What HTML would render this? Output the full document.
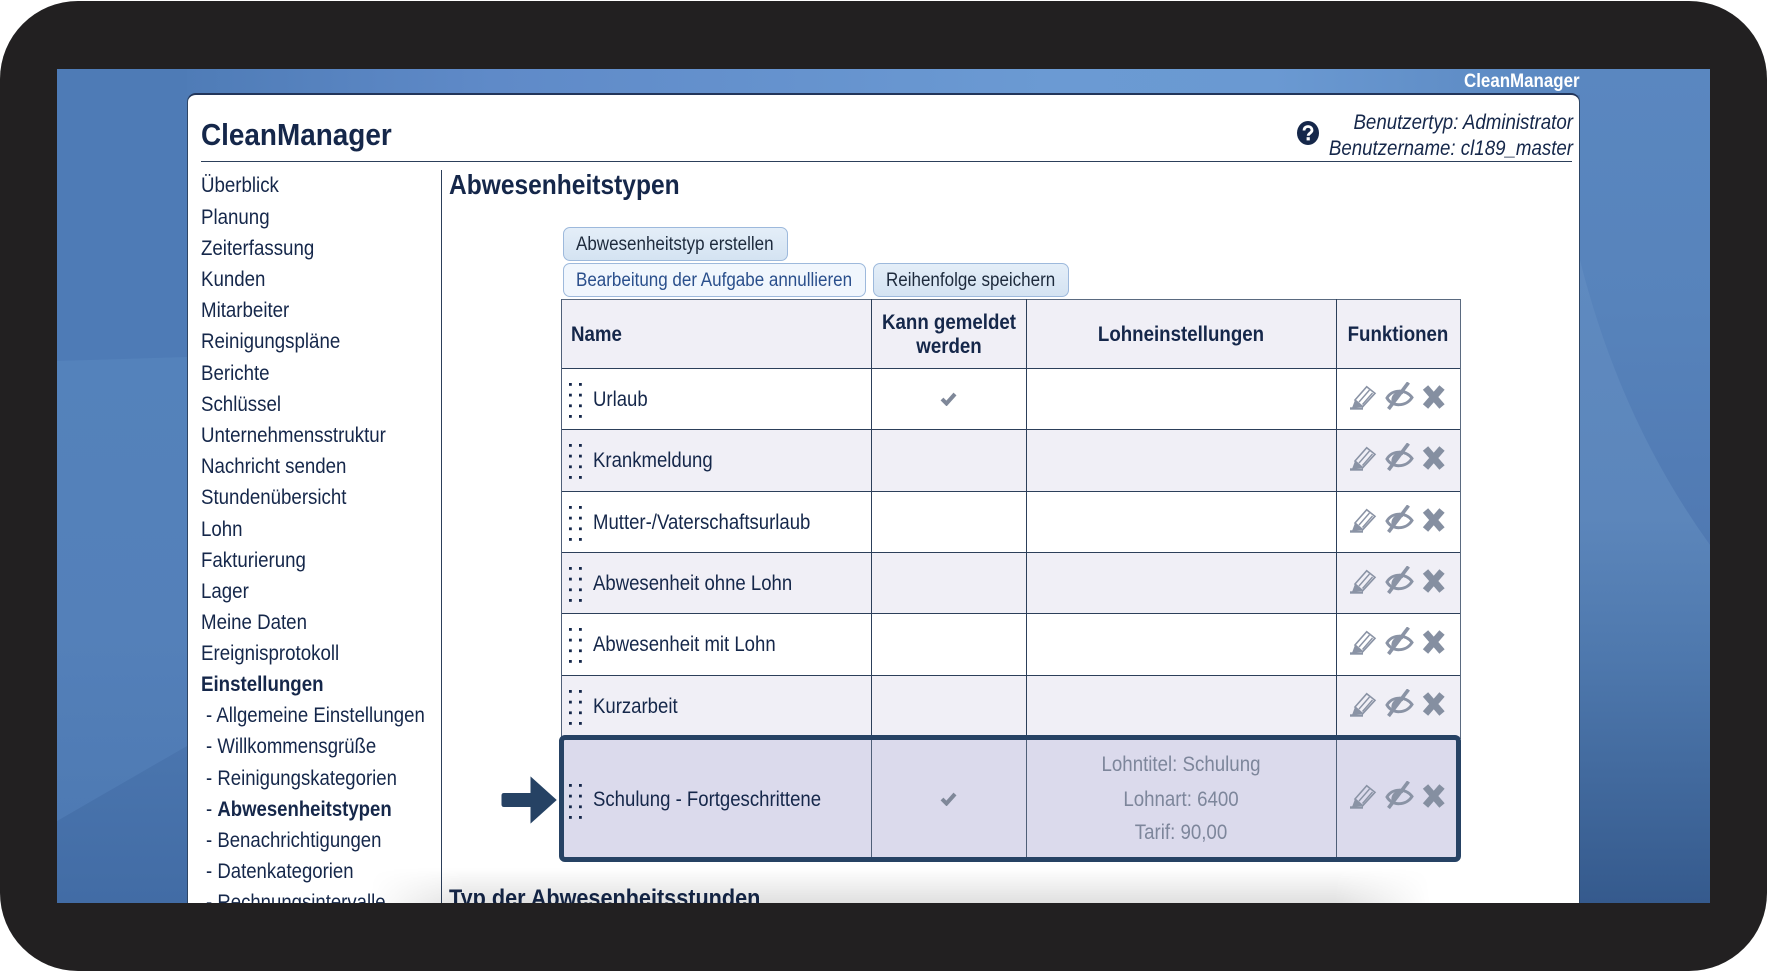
<!DOCTYPE html>
<html lang="de"><head><meta charset="utf-8"><title>CleanManager</title>
<style>
html,body{margin:0;padding:0;background:#fff;width:1767px;height:971px;overflow:hidden}
body{position:relative;font-family:"Liberation Sans",Arial,sans-serif;color:#15274a}
.frame{position:absolute;left:0;top:1px;width:1767px;height:970px;background:#222021;border-radius:78px}
.screen{position:absolute;left:57px;top:69px;width:1653px;height:834px;overflow:hidden;background:#4f7ab3}
.in{position:absolute;left:-57px;top:-69px;width:1767px;height:971px}
.strip{position:absolute;left:187px;top:69px;width:1393px;height:26px;background:linear-gradient(90deg,#4f7cb7 0,#5f8ac8 22%,#6b9ad3 62%,#6a99d2 78%,#5a87c0 100%)}
.panel{position:absolute;left:186.500px;top:93px;width:1393px;height:900px;background:#fff;border:1px solid #2d4565;border-top:2px solid #22355a;border-radius:9px 9px 0 0;box-sizing:border-box}
.t{position:absolute;white-space:nowrap;font-size:21px;line-height:30px;height:30px;margin-top:-15px;transform-origin:0 0;transform:scaleX(.89)}
.c{transform:scaleX(.89) translateX(-50%)}
.r{transform:scaleX(.89) translateX(-100%)}
.n{transform:scaleX(.884)}
.bt{font-size:19px;transform:scaleX(.895)}
.b{font-weight:bold}
.g{color:#7d869b}
.abs{position:absolute}
.btn{position:absolute;box-sizing:border-box;border:1px solid #9db9dc;border-radius:7px;background:linear-gradient(#e4eef8,#d4e3f2)}
.btn.l{background:#f0f6fd}
.h{position:absolute;background:#2c3f5a;height:1.2px;left:561px;width:899px}
.v{position:absolute;background:#2c3f5a;width:1.2px;top:299px;height:560px}
.row{position:absolute;left:562px;width:898px}
.gr{background:#f0eff6}
.ds{position:absolute;left:568px}
.fn{position:absolute;left:1349px;filter:blur(.35px)}
.sh{position:absolute;left:370px;top:868px;width:1060px;height:35px;background:linear-gradient(to bottom,rgba(0,0,0,0),rgba(0,0,0,.12));-webkit-mask-image:linear-gradient(90deg,transparent,#000 9%,#000 91%,transparent);mask-image:linear-gradient(90deg,transparent,#000 9%,#000 91%,transparent)}
</style></head><body>
<div class="frame"></div>
<div class="screen"><div class="in">
<svg class="abs" style="left:0;top:0" width="1767" height="971">
<defs>
<linearGradient id="la" x1="0" y1="0" x2="0" y2="1"><stop offset="0" stop-color="#5482bb"/><stop offset=".6" stop-color="#5480b9"/><stop offset="1" stop-color="#4e7ab3"/></linearGradient>
<linearGradient id="lb" x1="0" y1="0" x2="0" y2="1"><stop offset="0" stop-color="#4a75ae"/><stop offset="1" stop-color="#426ca5"/></linearGradient>
<linearGradient id="ra" x1="0" y1="0" x2="0" y2="1"><stop offset="0" stop-color="#5a87c0"/><stop offset=".5" stop-color="#5783bb"/><stop offset="1" stop-color="#5079b2"/></linearGradient>
<linearGradient id="rb" gradientUnits="userSpaceOnUse" x1="0" y1="260" x2="0" y2="903"><stop offset="0" stop-color="#5f8ac0"/><stop offset=".4" stop-color="#5c86bb"/><stop offset=".62" stop-color="#4e78ad"/><stop offset="1" stop-color="#355a8d"/></linearGradient>
</defs>
<rect x="57" y="69" width="130" height="292" fill="#4e7bb6"/>
<polygon points="57,361 187,357 187,746 57,821" fill="url(#la)"/>
<polygon points="57,821 187,746 187,903 57,903" fill="url(#lb)"/>
<rect x="1580" y="69" width="130" height="476" fill="url(#ra)"/>
<path d="M1580 260Q1620 420 1710 545L1710 903 1580 903Z" fill="url(#rb)"/>
</svg>
<div class="strip"></div>
<div class="t b" style="left:1464px;top:82px;font-size:19px;color:#fff">CleanManager</div>
<div class="panel"></div>

<div class="t b" style="left:201px;top:135px;font-size:31px;transform:scaleX(.9)">CleanManager</div>
<div class="abs" style="left:201px;top:161px;width:1371px;height:1px;background:#2c3f5a"></div>
<svg class="abs" style="left:1297px;top:121px" width="22" height="24" viewBox="0 0 22 24"><ellipse cx="11" cy="12" rx="11" ry="12" fill="#15274a"/><path d="M7 9.500C7 7 8.800 5.500 11 5.500S15 7 15 9.300C15 12 11.200 12.200 11.200 14.800" fill="none" stroke="#fff" stroke-width="2.800"/><rect x="9.600" y="16.200" width="3.200" height="3.200" fill="#fff"/></svg>
<div class="t r" style="left:1573px;top:123px;font-style:italic">Benutzertyp: Administrator</div>
<div class="t r" style="left:1573px;top:149px;font-style:italic">Benutzername: cl189_master</div>

<div class="abs" style="left:441px;top:170px;width:1px;height:740px;background:#2c3f5a"></div>

<div class="t" style="left:201px;top:186.300px">Überblick</div>
<div class="t" style="left:201px;top:217.500px">Planung</div>
<div class="t" style="left:201px;top:248.700px">Zeiterfassung</div>
<div class="t" style="left:201px;top:279.900px">Kunden</div>
<div class="t" style="left:201px;top:311.100px">Mitarbeiter</div>
<div class="t" style="left:201px;top:342.300px">Reinigungspläne</div>
<div class="t" style="left:201px;top:373.500px">Berichte</div>
<div class="t" style="left:201px;top:404.700px">Schlüssel</div>
<div class="t" style="left:201px;top:435.900px">Unternehmensstruktur</div>
<div class="t" style="left:201px;top:467.100px">Nachricht senden</div>
<div class="t" style="left:201px;top:498.300px">Stundenübersicht</div>
<div class="t" style="left:201px;top:529.500px">Lohn</div>
<div class="t" style="left:201px;top:560.700px">Fakturierung</div>
<div class="t" style="left:201px;top:591.900px">Lager</div>
<div class="t" style="left:201px;top:623.100px">Meine Daten</div>
<div class="t" style="left:201px;top:654.300px">Ereignisprotokoll</div>
<div class="t b" style="left:201px;top:685px">Einstellungen</div>
<div class="t n" style="left:206px;top:716.300px">- Allgemeine Einstellungen</div>
<div class="t n" style="left:206px;top:747.400px">- Willkommensgrüße</div>
<div class="t n" style="left:206px;top:778.600px">- Reinigungskategorien</div>
<div class="t n" style="left:206px;top:809.800px">- <b>Abwesenheitstypen</b></div>
<div class="t n" style="left:206px;top:841px">- Benachrichtigungen</div>
<div class="t n" style="left:206px;top:872.200px">- Datenkategorien</div>
<div class="t n" style="left:206px;top:903.400px">- Rechnungsintervalle</div>

<div class="t b" style="left:449px;top:185px;font-size:27.500px;transform:scaleX(.893)">Abwesenheitstypen</div>
<div class="t b" style="left:449px;top:899px;font-size:24.500px;transform:scaleX(.883)">Typ der Abwesenheitsstunden</div>

<div class="btn" style="left:563px;top:227px;width:225px;height:34px"></div>
<div class="t bt" style="left:576px;top:244.500px;color:#1d2a3c">Abwesenheitstyp erstellen</div>
<div class="btn l" style="left:563px;top:263px;width:303px;height:34px"></div>
<div class="t bt" style="left:576px;top:280.500px;color:#2a4f8c">Bearbeitung der Aufgabe annullieren</div>
<div class="btn" style="left:873px;top:263px;width:196px;height:34px"></div>
<div class="t bt" style="left:886px;top:280.500px;color:#1d2a3c">Reihenfolge speichern</div>

<div class="row gr" style="top:299px;height:69px"></div>
<div class="row gr" style="top:430px;height:61px"></div>
<div class="row gr" style="top:552px;height:61px"></div>
<div class="row gr" style="top:675px;height:61px"></div>
<div class="row" style="top:736px;height:124px;background:#dbdaec"></div>

<div class="h" style="top:298.500px;background:#5a6a80;height:1.500px"></div>
<div class="h" style="top:368px"></div>
<div class="h" style="top:429px"></div>
<div class="h" style="top:490.500px"></div>
<div class="h" style="top:552px"></div>
<div class="h" style="top:613px"></div>
<div class="h" style="top:674.500px"></div>
<div class="v" style="left:561px;background:#4f5f78;height:440px"></div>
<div class="v" style="left:870.500px"></div>
<div class="v" style="left:1025.500px"></div>
<div class="v" style="left:1335.500px"></div>
<div class="v" style="left:1459.500px;background:#5a6a80;height:440px"></div>

<div class="t b" style="left:571.300px;top:335px">Name</div>
<div class="t b c" style="left:949px;top:322.500px">Kann gemeldet</div>
<div class="t b c" style="left:949px;top:346.500px">werden</div>
<div class="t b c" style="left:1181px;top:335px">Lohneinstellungen</div>
<div class="t b c" style="left:1398px;top:335px">Funktionen</div>

<svg width="0" height="0" style="position:absolute"><defs>
<symbol id="dots" viewBox="0 0 16 36"><g fill="#15274a"><rect x="1" y="0" width="2.800" height="2.800"/><rect x="11" y="0" width="2.800" height="2.800"/><rect x="1" y="10.700" width="2.800" height="2.800"/><rect x="11" y="10.700" width="2.800" height="2.800"/><rect x="1" y="21.400" width="2.800" height="2.800"/><rect x="11" y="21.400" width="2.800" height="2.800"/><rect x="1" y="32" width="2.800" height="2.800"/><rect x="11" y="32" width="2.800" height="2.800"/></g></symbol>
<symbol id="fn" viewBox="0 0 98 30"><g fill="none" stroke="#8a93a5">
<path d="M6 18L17.700 4.700 26 11.300 13.700 24.700Z" stroke-width="1.600"/><path d="M10 20L20.500 8M13.500 22.500L23.500 11" stroke-width="1.400"/><path d="M1 26.500H14" stroke-width="2.400"/><path d="M3 26L6 18 13.700 24.700Z" fill="#8a93a5" stroke="none"/>
<path d="M38 16C43 7 57 7 63 15.500C57 25 43 25 38 16Z" stroke-width="3"/><path d="M44 19C43.500 13 49 10 54 10.500" stroke-width="3.200"/><path d="M59.500 0.500L39.500 27" stroke-width="3.600"/>
<path d="M76.500 5.500L93 24.500M93 5.500L76.500 24.500" stroke-width="7" stroke="#858fa1"/></g></symbol>
<symbol id="ck" viewBox="0 0 17 14"><path d="M2 7L6.500 11.500L15 2" fill="none" stroke="#7f8899" stroke-width="4"/></symbol>
</defs></svg>

<svg class="ds" style="top:383px" width="16" height="36"><use href="#dots"/></svg>
<div class="t n" style="left:592.700px;top:400px">Urlaub</div>
<svg class="abs" style="left:940px;top:392px" width="17" height="14"><use href="#ck"/></svg>
<svg class="fn" style="top:382px" width="98" height="30"><use href="#fn"/></svg>

<svg class="ds" style="top:444px" width="16" height="36"><use href="#dots"/></svg>
<div class="t n" style="left:592.700px;top:461.300px">Krankmeldung</div>
<svg class="fn" style="top:443px" width="98" height="30"><use href="#fn"/></svg>

<svg class="ds" style="top:505.500px" width="16" height="36"><use href="#dots"/></svg>
<div class="t n" style="left:592.700px;top:522.700px">Mutter-/Vaterschaftsurlaub</div>
<svg class="fn" style="top:504.500px" width="98" height="30"><use href="#fn"/></svg>

<svg class="ds" style="top:567px" width="16" height="36"><use href="#dots"/></svg>
<div class="t n" style="left:592.700px;top:584px">Abwesenheit ohne Lohn</div>
<svg class="fn" style="top:566px" width="98" height="30"><use href="#fn"/></svg>

<svg class="ds" style="top:628px" width="16" height="36"><use href="#dots"/></svg>
<div class="t n" style="left:592.700px;top:645.300px">Abwesenheit mit Lohn</div>
<svg class="fn" style="top:627px" width="98" height="30"><use href="#fn"/></svg>

<svg class="ds" style="top:690px" width="16" height="36"><use href="#dots"/></svg>
<div class="t n" style="left:592.700px;top:706.800px">Kurzarbeit</div>
<svg class="fn" style="top:689px" width="98" height="30"><use href="#fn"/></svg>

<div class="v" style="left:870.500px;top:736px;height:124px;background:#4f5f78"></div>
<div class="v" style="left:1025.500px;top:736px;height:124px;background:#4f5f78"></div>
<div class="v" style="left:1335.500px;top:736px;height:124px;background:#4f5f78"></div>
<div class="abs" style="left:559px;top:735px;width:902px;height:127px;box-sizing:border-box;border:5px solid #264264;border-radius:6px"></div>
<svg class="ds" style="top:784px" width="16" height="36"><use href="#dots"/></svg>
<div class="t n" style="left:592.700px;top:799.500px">Schulung - Fortgeschrittene</div>
<svg class="abs" style="left:940px;top:792px" width="17" height="14"><use href="#ck"/></svg>
<div class="t c g" style="left:1181px;top:765px">Lohntitel: Schulung</div>
<div class="t c g" style="left:1181px;top:799.500px">Lohnart: 6400</div>
<div class="t c g" style="left:1181px;top:833.300px">Tarif: 90,00</div>
<svg class="fn" style="top:781px" width="98" height="30"><use href="#fn"/></svg>

<svg class="abs" style="left:501px;top:776px" width="57" height="48"><path d="M3 17.500H30V1.500L55 24 30 46.500V30.500H3Q1 30.500 1 28.500V19.500Q1 17.500 3 17.500Z" fill="#264264" stroke="#264264"/></svg>

<div class="sh"></div>
</div></div>
</body></html>
